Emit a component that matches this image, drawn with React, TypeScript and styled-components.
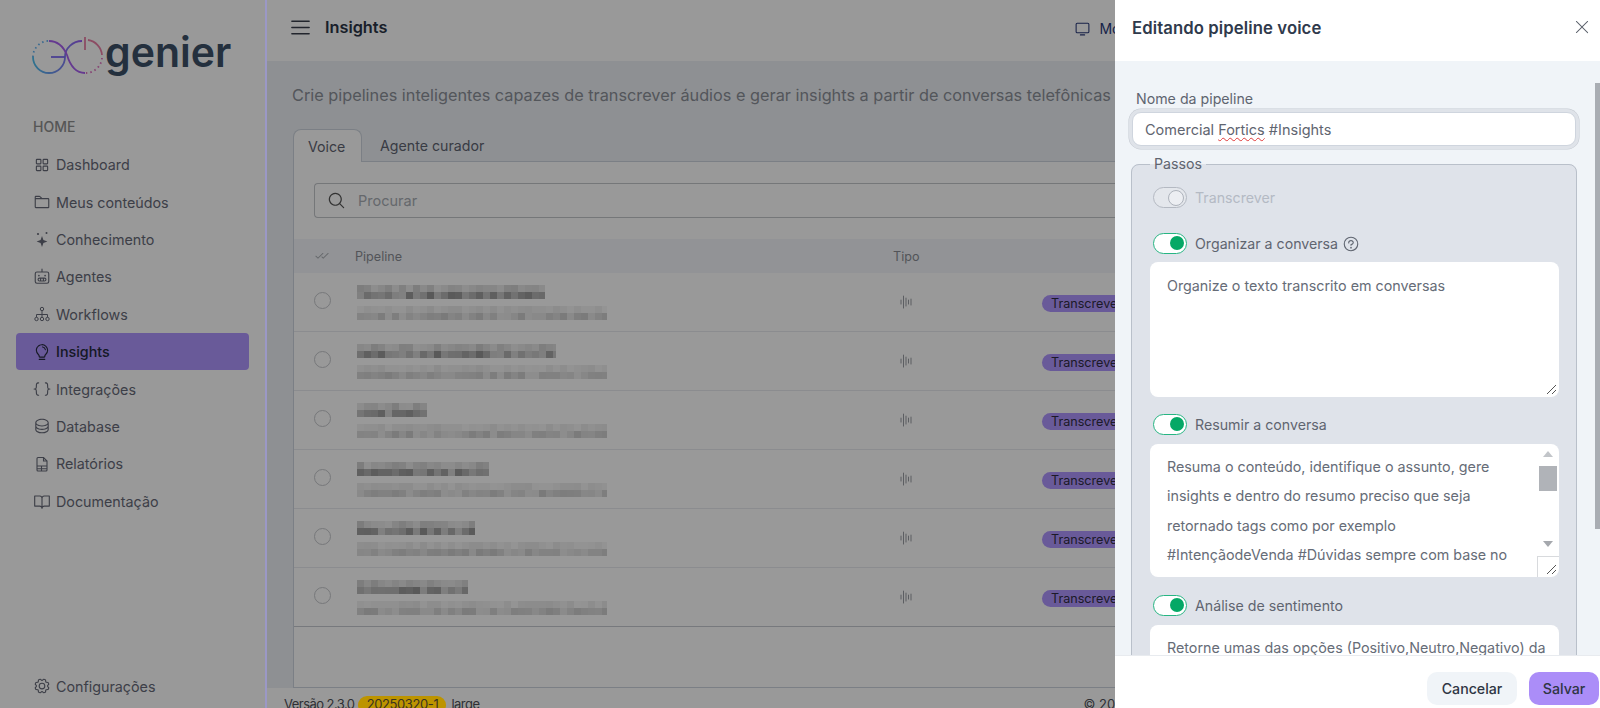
import React from "react";
import styled, { createGlobalStyle } from "styled-components";
import {
  PiSquaresFour, PiFolder, PiRobot, PiLightbulb, PiBracketsCurly, PiDatabase, PiBookOpen, PiGear,
  PiList, PiMonitor, PiMagnifyingGlass, PiChecks, PiXLight, PiQuestion, PiWaveform,
} from "react-icons/pi";

const FONT = `"Inter", "Liberation Sans", sans-serif`;

const Global = createGlobalStyle`
  html, body { margin: 0; padding: 0; background: #fff; }
  body { font-family: ${FONT}; overflow: hidden; }
  * { box-sizing: border-box; }
`;

const Page = styled.div`
  position: relative; width: 1600px; height: 708px; overflow: hidden; display: flex; background: #fff;
`;
const Sidebar = styled.aside`
  position: relative; width: 267px; flex: none; display: flex; flex-direction: column; padding: 0 18px 0 16px; background: #fff;
  &::after { content: ""; position: absolute; top: 0; bottom: 0; right: 0; width: 2px; background: #9b98c6; z-index: 11; }
`;
const LogoRow = styled.div`
  display: flex; align-items: center; height: 50px; margin-top: 30px; padding-left: 16px; gap: 1px;
`;
const LogoWord = styled.span`
  font: 600 41px/50px "Inter", sans-serif; color: #3d5168; margin-top: -6px;
`;
const SectionLabel = styled.div`
  margin: 37px 0 9px 17px; font-size: 14px; line-height: 20px; font-weight: 500; color: #8f8f8f;
`;
const NavList = styled.nav`
  display: flex; flex-direction: column; flex: 1;
`;
const NavItem = styled.div<{ $active?: boolean }>`
  display: flex; align-items: center; gap: 5px; height: 37.4px; padding-left: 17px; border-radius: 4px;
  font-size: 14.3px; color: ${(p) => (p.$active ? "#242a3c" : "#676a78")};
  font-weight: ${(p) => (p.$active ? 500 : 400)};
  background: ${(p) => (p.$active ? "#b096ff" : "transparent")};
  svg { flex: none; width: 18px; height: 18px; }
`;
const NavBottom = styled(NavItem)`
  margin-top: auto; margin-bottom: 3px;
`;
const Main = styled.main`
  flex: 1; min-width: 0; display: flex; flex-direction: column; background: #edf1f5;
`;
const TopBar = styled.header`
  height: 61px; flex: none; background: #fff; display: flex; align-items: center; padding: 0 0 7px 21px;
`;
const TopTitle = styled.h1`
  margin: 0 0 0 12px; font-size: 16.3px; font-weight: 600; color: #2b3446;
`;
const TopRight = styled.div`
  margin-left: 687px; display: flex; align-items: center; gap: 8px; font-size: 14px; color: #2a3a7a; margin-top: 3px;
`;
const Content = styled.section`
  flex: 1; min-height: 0; padding-left: 26px; display: flex; flex-direction: column;
`;
const Description = styled.p`
  margin: 23px 0 0 -1px; height: 22px; font-size: 16.3px; line-height: 22px; color: #8b8f98; white-space: nowrap;
`;
const TabBar = styled.div`
  margin-top: 23px; height: 33px; display: flex; border-bottom: 1px solid #cdd4de;
`;
const Tab = styled.div<{ $active?: boolean }>`
  height: 33px; padding: 0 ${(p) => (p.$active ? "14px" : "18px")}; display: flex; align-items: center; font-size: 14.2px;
  color: #5f6472;
  ${(p) => (p.$active ? "background:#fff;border:1px solid #cdd4de;border-bottom:0;border-radius:8px 8px 0 0;width:69px;" : "")}
`;
const Panel = styled.div`
  flex: 1; min-height: 0; background: #fff; border-left: 1px solid #cdd4de; border-bottom: 1px solid #cdd4de; display: flex; flex-direction: column;
`;
const SearchBar = styled.div`
  margin: 21px 0 21px 20px; height: 35px; border: 1px solid #c4c6ca; border-right: 0; border-radius: 4px 0 0 4px; display: flex; align-items: center;
  padding-left: 12px; gap: 12px; color: #555; font-size: 14.5px;
  span { color: #a8adb5; }
`;
const TableRow = styled.div<{ $head?: boolean }>`
  display: grid; grid-template-columns: 61px 538px 149px 1fr; align-items: center;
  height: ${(p) => (p.$head ? "34px" : "59px")};
  background: ${(p) => (p.$head ? "#f3f6fa" : "#fff")};
  border-bottom: ${(p) => (p.$head ? "0" : "1px solid #e8eaee")};
  font-size: 12.6px; color: #8a8d94;
  &:last-of-type { border-bottom-color: #c6cad0; }
`;
const CheckCell = styled.div`
  padding-left: 21px; display: flex; color: #a9acb2;
`;
const Radio = styled.span`
  width: 17px; height: 17px; border-radius: 50%; border: 1px solid #c6c8cc; margin: -3px 0 0 -1px;
`;
const NameCell = styled.div`
  display: flex; flex-direction: column; padding-left: 2px;
`;
const TypeCell = styled.div`
  color: #9a9da3; display: flex; padding-left: 5px;
`;
const Pill = styled.span`
  height: 17px; width: 90px; padding-left: 9px; border-radius: 9px; background: #b096ff; color: #2f2c44; font-size: 12.6px; line-height: 17px; margin-top: 3px;
`;
const Foot = styled.footer`
  height: 20px; flex: none; background: #fff; display: flex; padding: 8px 0 0 17px; font-size: 13px; line-height: 16px; color: #4e5058; white-space: nowrap;
`;
const FootText = styled.span`
  letter-spacing: -0.55px;
`;
const Badge = styled.span`
  position: relative; z-index: 11; height: 18px; width: 88px; margin: 0 5px 0 4px; border-radius: 9px; background: #bd9400; color: #3a3320; text-align: center; letter-spacing: -0.4px;
`;
const Copy = styled.span`
  margin-left: 604px;
`;
const Overlay = styled.div`
  position: absolute; inset: 0; background: rgba(0,0,0,.4); z-index: 10;
`;
const Drawer = styled.div`
  position: absolute; top: 0; right: 0; bottom: 0; width: 485px; background: #fff; z-index: 20; display: flex; flex-direction: column;
`;
const DrawerHead = styled.div`
  height: 61px; flex: none; display: flex; align-items: center; justify-content: space-between; padding: 0 8px 6px 17px;
`;
const DrawerTitle = styled.h2`
  margin: 0; font-size: 16.7px; font-weight: 600; letter-spacing: 0.1px; color: #2f3a4c;
`;
const CloseBtn = styled.span`
  display: flex; color: #5b616b; margin-top: -1px;
`;
const DrawerBody = styled.div`
  position: relative; flex: 1; min-height: 0; overflow: hidden; background: #f0f4f8; padding: 28px 23px 0 16px;
`;
const ScrollThumb = styled.div`
  position: absolute; right: 0; top: 22px; width: 5px; height: 446px; background: #a9adb3;
`;
const FieldLabel = styled.div`
  margin-left: 5px; font-size: 14.2px; line-height: 20px; color: #5f6570;
`;
const NameInput = styled.div`
  margin: 3px 1px 8px; height: 34px; background: #fff; border: 1px solid #cfd5de; border-radius: 9px; box-shadow: 0 0 0 3px #dfe3e9, 0 0 0 3.5px #c4c9d1;
  display: flex; align-items: center; padding-left: 12px; font-size: 14.5px; color: #5f6570; white-space: pre;
`;
const Misspelled = styled.span`
  text-decoration: underline wavy #e03a3a 1px; text-underline-offset: 2px;
`;
const Steps = styled.fieldset`
  margin: 0; padding: 13px 17px 0 18px; min-width: 0; border: 1px solid #b9c0ca; border-radius: 8px; background: #dfe3ea;
  display: flex; flex-direction: column; gap: 17px;
`;
const StepsLegend = styled.legend`
  padding: 0 4px; font-size: 14.2px; line-height: 20px; color: #5f6570;
`;
const Step = styled.div<{ $extra?: number }>`
  display: flex; flex-direction: column; margin-bottom: ${(p) => p.$extra ?? 0}px;
`;
const StepHead = styled.div<{ $disabled?: boolean; $mb?: number }>`
  display: flex; align-items: center; height: 21px; margin: 0 0 ${(p) => p.$mb ?? 9}px 3px; gap: 8px; font-size: 14.2px;
  color: ${(p) => (p.$disabled ? "#b4bac4" : "#5f6570")};
  svg { margin-left: -4px; color: #5f6570; }
`;
const Toggle = styled.span<{ $on?: boolean }>`
  position: relative; width: 34px; height: 21px; flex: none; border-radius: 11px;
  border: 1.5px solid ${(p) => (p.$on ? "#27b583" : "#b4b9c2")};
  background: ${(p) => (p.$on ? "#fff" : "#e4e7ec")};
  &::after {
    content: ""; position: absolute; top: 2px; right: 2.5px; width: 14px; height: 14px; border-radius: 50%;
    background: ${(p) => (p.$on ? "#05a866" : "#eceef2")};
    border: ${(p) => (p.$on ? "0" : "1.5px solid #aeb3bc")};
  }
`;
const TextBox = styled.div<{ $h: number; $pt?: number; $pr?: number }>`
  position: relative; height: ${(p) => p.$h}px; background: #fff; border-radius: 8px; overflow: hidden;
  padding: ${(p) => p.$pt ?? 8}px ${(p) => p.$pr ?? 17}px 0 17px; font-size: 14.3px; line-height: 29.3px; color: #666c77;
`;
const Resizer = styled.svg`
  position: absolute; right: 2px; bottom: 2px;
`;
const BoxScroll = styled.div`
  position: absolute; right: 0; top: 0; bottom: 0; width: 22px;
`;
const Thumb = styled.div`
  position: absolute; right: 2px; top: 22px; width: 18px; height: 25px; background: #b0b3b8;
`;
const Arrow = styled.svg<{ $top: number }>`
  position: absolute; right: 6px; top: ${(p) => p.$top}px;
`;
const ResizeCorner = styled.div`
  position: absolute; right: 0; bottom: 0; width: 22px; height: 21px; border: 1px solid #d8dadd; border-right: 0; border-bottom: 0;
`;
const DrawerFoot = styled.div`
  height: 53px; flex: none; border-top: 1px solid #e8ebef; display: flex; justify-content: flex-end; align-items: flex-end; gap: 12px; padding: 0 1px 3px 0;
`;
const Btn = styled.button<{ $primary?: boolean; $w: number }>`
  width: ${(p) => p.$w}px; height: 33px; border: 0; border-radius: 10px; font: 500 14.2px ${FONT};
  background: ${(p) => (p.$primary ? "#ab8df8" : "#f0f4f8")}; color: #2f3644;
`;

const SparkIcon = () => (
  <svg viewBox="0 0 18 18" fill="currentColor"><path d="M9 6l1.4 4 4 1.5-4 1.5L9 17l-1.4-4-4-1.5 4-1.5z" /><circle cx="5" cy="4" r="1.1" /><circle cx="13.5" cy="3" r="1" /></svg>
);
const TreeIcon = () => (
  <svg viewBox="0 0 18 18" fill="none" stroke="currentColor" strokeWidth="1"><circle cx="9" cy="4" r="1.7" /><circle cx="3.5" cy="14" r="1.7" /><circle cx="9" cy="14" r="1.7" /><circle cx="14.5" cy="14" r="1.7" /><path d="M9 5.7v6.6M3.5 12.3V9.5h11v2.8" /></svg>
);
const ReportIcon = () => (
  <svg viewBox="0 0 18 18" fill="none" stroke="currentColor" strokeWidth="1.1"><path d="M4 9V3.5A1 1 0 0 1 5 2.5h5.5L14 6v9a1 1 0 0 1-1 1H5a1 1 0 0 1-1-1z" /><path d="M10.5 2.5V6H14M4 11h10M4 13.8h10M8.5 11v5" /></svg>
);
const LogoMark = () => (
  <svg width="72" height="40" viewBox="31 35 72 40" fill="none" strokeWidth="1.8">
    <defs>
      <linearGradient id="gBlue" x1="0" y1="0" x2="1" y2="0">
        <stop offset="0" stopColor="#4fc0ee" />
        <stop offset="1" stopColor="#9a5cf5" />
      </linearGradient>
    </defs>
    <path d="M32 57A16 16 0 0 0 64 57C64 48 72 41 81 41" stroke="url(#gBlue)" />
    <path d="M50 57H64" stroke="#7d6cf5" />
    <path d="M32 57A16 16 0 0 1 50 41" stroke="#5fb0f0" strokeDasharray="1.5 3" />
    <path d="M48 41C58 41 63 48 66 55 69 65 75 73 84 73" stroke="#a860f0" />
    <path d="M87 40A16.5 16.5 0 0 1 101 55" stroke="#ea7fa6" />
    <path d="M101 58A16.5 16.5 0 0 1 85 73" stroke="#e070c0" strokeDasharray="1.5 3" />
    <path d="M84 37V50" stroke="#ea7fa6" />
  </svg>
);

const hash = (a: number, b: number) => {
  const x = Math.sin(a * 12.9898 + b * 78.233) * 43758.5453;
  return x - Math.floor(x);
};
const CELL = 7;
const MosaicSvg = styled.svg`
  display: block; margin-bottom: 7px; filter: blur(0.6px); &:last-child { margin-bottom: 0; }
`;
const Mosaic = ({ w, rows, seed, strength }: { w: number; rows: number; seed: number; strength: number }) => {
  const cols = Math.ceil(w / CELL);
  const cells = [];
  for (let r = 0; r < rows; r++) {
    for (let c = 0; c < cols; c++) {
      const base = rows === 2 && r === 0 ? 0.45 : 1;
      const o = (0.35 + hash(seed + r, c) * 0.65) * strength * base;
      cells.push(<rect key={`${r}-${c}`} x={c * CELL} y={r * CELL} width={CELL} height={CELL} fill="#000" opacity={o} />);
    }
  }
  return <MosaicSvg width={w} height={rows * CELL}>{cells}</MosaicSvg>;
};

const nav = [
  { label: "Dashboard", icon: <PiSquaresFour /> },
  { label: "Meus conteúdos", icon: <PiFolder /> },
  { label: "Conhecimento", icon: <SparkIcon /> },
  { label: "Agentes", icon: <PiRobot /> },
  { label: "Workflows", icon: <TreeIcon /> },
  { label: "Insights", icon: <PiLightbulb />, active: true },
  { label: "Integrações", icon: <PiBracketsCurly /> },
  { label: "Database", icon: <PiDatabase /> },
  { label: "Relatórios", icon: <ReportIcon /> },
  { label: "Documentação", icon: <PiBookOpen /> },
];
const rows = [
  { title: 188, sub: 250 },
  { title: 199, sub: 250 },
  { title: 70, sub: 250 },
  { title: 132, sub: 250 },
  { title: 118, sub: 250 },
  { title: 111, sub: 250 },
];

const ResizeGlyph = () => (
  <Resizer width="11" height="11" viewBox="0 0 11 11" stroke="#555" strokeWidth="1"><path d="M1 10 10 1M6 10 10 6" /></Resizer>
);

export default function App() {
  return (
    <>
      <Global />
      <Page>
        <Sidebar>
          <LogoRow>
            <LogoMark />
            <LogoWord>genier</LogoWord>
          </LogoRow>
          <SectionLabel>HOME</SectionLabel>
          <NavList>
            {nav.map((n) => (
              <NavItem key={n.label} $active={n.active}>{n.icon}{n.label}</NavItem>
            ))}
            <NavBottom><PiGear />Configurações</NavBottom>
          </NavList>
        </Sidebar>
        <Main>
          <TopBar>
            <PiList size={25} color="#3a3f4c" />
            <TopTitle>Insights</TopTitle>
            <TopRight><PiMonitor size={17} />Modo</TopRight>
          </TopBar>
          <Content>
            <Description>Crie pipelines inteligentes capazes de transcrever áudios e gerar insights a partir de conversas telefônicas</Description>
            <TabBar>
              <Tab $active>Voice</Tab>
              <Tab>Agente curador</Tab>
            </TabBar>
            <Panel>
              <SearchBar><PiMagnifyingGlass size={19} /><span>Procurar</span></SearchBar>
              <TableRow $head>
                <CheckCell><PiChecks size={14} /></CheckCell>
                <span>Pipeline</span>
                <span>Tipo</span>
                <span />
              </TableRow>
              {rows.map((r, i) => (
                <TableRow key={i}>
                  <CheckCell><Radio /></CheckCell>
                  <NameCell>
                    <Mosaic w={r.title} rows={2} seed={i * 3 + 1} strength={0.42} />
                    <Mosaic w={r.sub} rows={2} seed={i * 3 + 2} strength={0.2} />
                  </NameCell>
                  <TypeCell><PiWaveform size={16} /></TypeCell>
                  <Pill>Transcrever</Pill>
                </TableRow>
              ))}
            </Panel>
          </Content>
          <Foot>
            <FootText>Versão 2.3.0</FootText><Badge>20250320-1</Badge><FootText>large</FootText><Copy>© 2025</Copy>
          </Foot>
        </Main>
        <Overlay />
        <Drawer>
          <DrawerHead>
            <DrawerTitle>Editando pipeline voice</DrawerTitle>
            <CloseBtn><PiXLight size={20} /></CloseBtn>
          </DrawerHead>
          <DrawerBody>
            <ScrollThumb />
            <FieldLabel>Nome da pipeline</FieldLabel>
            <NameInput>Comercial <Misspelled>Fortics</Misspelled> #Insights</NameInput>
            <Steps>
              <StepsLegend>Passos</StepsLegend>
              <Step><StepHead $disabled $mb={8}><Toggle />Transcrever</StepHead></Step>
              <Step>
                <StepHead $mb={8}><Toggle $on />Organizar a conversa <PiQuestion size={18} /></StepHead>
                <TextBox $h={135} $pt={9}>Organize o texto transcrito em conversas<ResizeGlyph /></TextBox>
              </Step>
              <Step $extra={1}>
                <StepHead><Toggle $on />Resumir a conversa</StepHead>
                <TextBox $h={133} $pr={40}>
                  Resuma o conteúdo, identifique o assunto, gere insights e dentro do resumo preciso que seja retornado tags como por exemplo #IntençãodeVenda #Dúvidas sempre com base no
                  <BoxScroll>
                    <Arrow $top={7} width="10" height="6" viewBox="0 0 10 6"><path d="M5 0 10 6H0z" fill="#c2c5c9" /></Arrow>
                    <Thumb />
                    <Arrow $top={97} width="10" height="6" viewBox="0 0 10 6"><path d="M0 0H10L5 6z" fill="#a5a8ad" /></Arrow>
                    <ResizeCorner />
                  </BoxScroll>
                  <ResizeGlyph />
                </TextBox>
              </Step>
              <Step>
                <StepHead><Toggle $on />Análise de sentimento</StepHead>
                <TextBox $h={120} $pr={8}>Retorne umas das opções (Positivo,Neutro,Negativo) da</TextBox>
              </Step>
            </Steps>
          </DrawerBody>
          <DrawerFoot>
            <Btn $w={90}>Cancelar</Btn>
            <Btn $w={70} $primary>Salvar</Btn>
          </DrawerFoot>
        </Drawer>
      </Page>
    </>
  );
}
